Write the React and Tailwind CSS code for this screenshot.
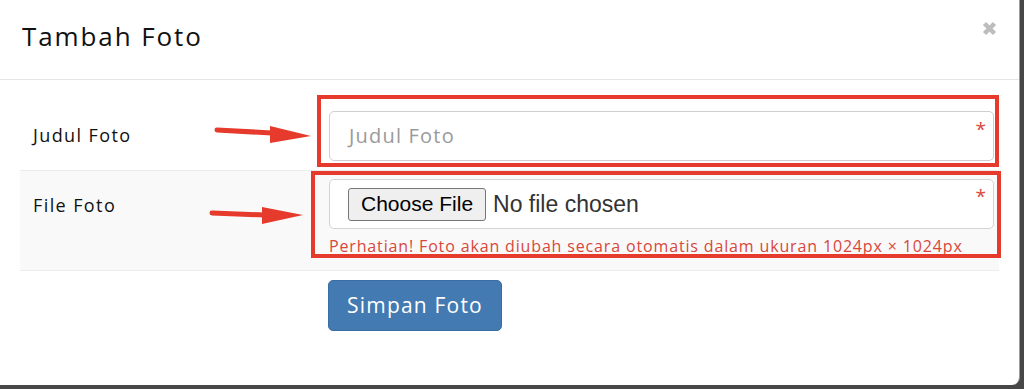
export default function App() {
  const font = { fontFamily: '"Open Sans", "Noto Sans", sans-serif' };
  const sys = { fontFamily: '"Liberation Sans", Arial, sans-serif' };
  return (
    <div className="w-[1024px] h-[389px] bg-[#474747] overflow-hidden">
      <div
        className="relative w-[1020px] h-[385px] bg-white rounded-br-[8px] border-r border-[#9a9a9a]"
        style={font}
      >
        {/* Header */}
        <div className="h-[80px] border-b border-[#e5e5e5] flex items-center justify-between pl-[22px] pr-[22px]">
          <h4 className="text-[26px] text-[#111] tracking-[1.9px] pb-[6px]">Tambah Foto</h4>
          <svg width="15" height="15" viewBox="0 0 15 15" className="mb-[22px]">
            <path d="M2.5 2.5 L12.5 12.5 M12.5 2.5 L2.5 12.5" stroke="#bdbdbd" strokeWidth="4.5" strokeLinecap="butt" />
          </svg>
        </div>

        {/* Body */}
        <div className="px-[20px]">
          {/* Row 1 */}
          <div className="flex h-[90px]">
            <div className="w-[300px] pl-[13px] pt-[43px] text-[18px] leading-[24px] tracking-[1.4px] text-[#111]">
              Judul Foto
            </div>
            <div className="flex-1 pl-[9px] pr-[5px] pt-[31px]">
              <div className="relative h-[50px] border border-[#cfcfcf] rounded-[5px] flex items-center pl-[19px]">
                <span className="text-[20px] tracking-[1.2px] text-[#9a9a9a]">Judul Foto</span>
                <span className="absolute right-[7px] top-[3px] text-[19px] text-[#d9463b]">*</span>
              </div>
            </div>
          </div>

          {/* Row 2 */}
          <div className="flex h-[101px] bg-[#f9f9f9] border-t border-b border-[#ececec]">
            <div className="w-[300px] pl-[13px] pt-[22px] text-[18px] leading-[24px] tracking-[1.4px] text-[#111]">
              File Foto
            </div>
            <div className="flex-1 pl-[9px] pr-[5px] pt-[8px]">
              <div className="relative h-[50px] bg-white border border-[#d4d4d4] rounded-[5px] flex items-center pl-[18px]">
                <div
                  className="h-[33px] px-[12px] flex items-center bg-[#efefef] border border-[#767676] rounded-[3px] text-[21px] text-black"
                  style={sys}
                >
                  Choose File
                </div>
                <span className="ml-[7px] text-[23px] text-[#333]" style={sys}>
                  No file chosen
                </span>
                <span className="absolute right-[7px] top-[2px] text-[19px] text-[#d9463b]">*</span>
              </div>
              <div className="mt-[7px] text-[16px] leading-[20px] tracking-[0.85px] text-[#d9463b] whitespace-nowrap">
                Perhatian! Foto akan diubah secara otomatis dalam ukuran 1024px × 1024px
              </div>
            </div>
          </div>

          {/* Button row */}
          <div className="pl-[308px] pt-[9px]">
            <div className="w-[174px] h-[51px] bg-[#437ab2] border border-[#3a6ea3] rounded-[5px] flex items-center justify-center text-white text-[21px] tracking-[1.2px]">
              Simpan Foto
            </div>
          </div>
        </div>

        {/* Annotation boxes */}
        <div className="absolute left-[317px] top-[95px] w-[682px] h-[72px] border-[4px] border-[#e53a2c] pointer-events-none" />
        <div className="absolute left-[311px] top-[171px] w-[690px] h-[87px] border-[4px] border-[#e53a2c] pointer-events-none" />

        {/* Arrows */}
        <svg className="absolute left-0 top-0 pointer-events-none" width="1020" height="385">
          <path d="M217 130 L272 133" stroke="#e53a2c" strokeWidth="5" strokeLinecap="round" fill="none" />
          <path d="M270 126 L311 136 L270 143 Z" fill="#e53a2c" />
          <path d="M212 213 L264 215" stroke="#e53a2c" strokeWidth="5" strokeLinecap="round" fill="none" />
          <path d="M262 207 L303 215 L262 224 Z" fill="#e53a2c" />
        </svg>
      </div>
    </div>
  );
}
